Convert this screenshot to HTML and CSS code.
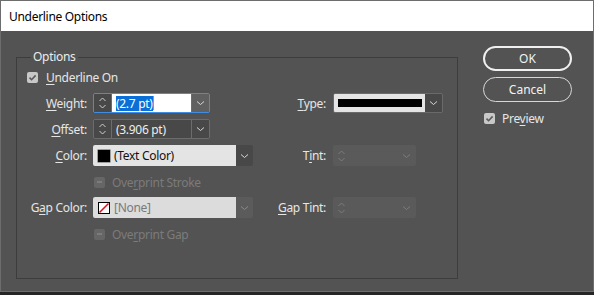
FILE: index.html
```html
<!DOCTYPE html>
<html>
<head>
<meta charset="utf-8">
<link rel="stylesheet" href="styles.css">
</head>
<body>
<div class="window">
  <div class="titlebar">Underline Options</div>
  <div class="content">
    <fieldset class="group">
      <legend class="legend">Options</legend>
      <div class="rows">
        <div class="row row-cb">
          <span class="check on"><svg width="11" height="11" viewBox="0 0 11 11"><path d="M2.5 5.6 L4.6 7.7 L8.6 3.4" fill="none" stroke="#5a5a5a" stroke-width="1.6"/></svg></span>
          <span class="cb-text"><u>U</u>nderline On</span>
        </div>

        <div class="row row-weight">
          <span class="lbl"><u>W</u>eight:</span>
          <div class="col2">
            <div class="spin focus">
              <span class="stepper"><svg width="9" height="14" viewBox="0 0 9 14"><path d="M1.5 5 L4.5 2 L7.5 5 M1.5 9 L4.5 12 L7.5 9" fill="none" stroke="#cfcfcf" stroke-width="1"/></svg></span>
              <span class="field white"><span class="sel">(2.7 pt)</span><span class="caret"></span></span>
              <span class="drop hover"><svg width="9" height="6" viewBox="0 0 9 6"><path d="M1 1.5 L4.5 4.5 L8 1.5" fill="none" stroke="#d8d8d8" stroke-width="1"/></svg></span>
            </div>
          </div>
          <span class="lbl2"><u>T</u>ype:</span>
          <div class="combo type">
            <span class="light"><span class="bar"></span></span>
            <span class="drop"><svg width="9" height="6" viewBox="0 0 9 6"><path d="M1 1.5 L4.5 4.5 L8 1.5" fill="none" stroke="#d8d8d8" stroke-width="1"/></svg></span>
          </div>
        </div>

        <div class="row row-offset">
          <span class="lbl"><u>O</u>ffset:</span>
          <div class="col2">
            <div class="spin">
              <span class="stepper"><svg width="9" height="14" viewBox="0 0 9 14"><path d="M1.5 5 L4.5 2 L7.5 5 M1.5 9 L4.5 12 L7.5 9" fill="none" stroke="#cfcfcf" stroke-width="1"/></svg></span>
              <span class="field dark">(3.906 pt)</span>
              <span class="drop"><svg width="9" height="6" viewBox="0 0 9 6"><path d="M1 1.5 L4.5 4.5 L8 1.5" fill="none" stroke="#d8d8d8" stroke-width="1"/></svg></span>
            </div>
          </div>
        </div>

        <div class="row row-color">
          <span class="lbl"><u>C</u>olor:</span>
          <div class="col2">
            <div class="combo color">
              <span class="light"><span class="swatch black"></span><span class="ctext">(Text Color)</span></span>
              <span class="drop"><svg width="9" height="6" viewBox="0 0 9 6"><path d="M1 1.5 L4.5 4.5 L8 1.5" fill="none" stroke="#d8d8d8" stroke-width="1"/></svg></span>
            </div>
          </div>
          <span class="lbl2">T<u>i</u>nt:</span>
          <div class="tint">
            <svg width="9" height="14" viewBox="0 0 9 14"><path d="M1.5 5 L4.5 2 L7.5 5 M1.5 9 L4.5 12 L7.5 9" fill="none" stroke="#7c7c7c" stroke-width="1"/></svg>
            <svg width="9" height="6" viewBox="0 0 9 6"><path d="M1 1.5 L4.5 4.5 L8 1.5" fill="none" stroke="#7c7c7c" stroke-width="1"/></svg>
          </div>
        </div>

        <div class="row row-cb2">
          <span class="check off"><span class="dash"></span></span>
          <span class="cb-text dis">Ove<u>r</u>print Stroke</span>
        </div>

        <div class="row row-gap">
          <span class="lbl">G<u>a</u>p Color:</span>
          <div class="col2">
            <div class="combo color disabled">
              <span class="light"><span class="swatch none"><svg width="12" height="12" viewBox="0 0 12 12"><rect x="0.5" y="0.5" width="11" height="11" fill="#fff" stroke="#000"/><path d="M1.5 10.5 L10.5 1.5" stroke="#e0101a" stroke-width="1.6"/></svg></span><span class="ctext">[None]</span></span>
              <span class="drop"><svg width="9" height="6" viewBox="0 0 9 6"><path d="M1 1.5 L4.5 4.5 L8 1.5" fill="none" stroke="#8a8a8a" stroke-width="1"/></svg></span>
            </div>
          </div>
          <span class="lbl2"><u>G</u>ap Tint:</span>
          <div class="tint">
            <svg width="9" height="14" viewBox="0 0 9 14"><path d="M1.5 5 L4.5 2 L7.5 5 M1.5 9 L4.5 12 L7.5 9" fill="none" stroke="#7c7c7c" stroke-width="1"/></svg>
            <svg width="9" height="6" viewBox="0 0 9 6"><path d="M1 1.5 L4.5 4.5 L8 1.5" fill="none" stroke="#7c7c7c" stroke-width="1"/></svg>
          </div>
        </div>

        <div class="row row-cb2 last">
          <span class="check off"><span class="dash"></span></span>
          <span class="cb-text dis">Ove<u>r</u>print Gap</span>
        </div>
      </div>
    </fieldset>

    <div class="buttons">
      <button class="btn default">OK</button>
      <button class="btn">Cancel</button>
      <div class="preview">
        <span class="check on"><svg width="11" height="11" viewBox="0 0 11 11"><path d="M2.5 5.6 L4.6 7.7 L8.6 3.4" fill="none" stroke="#5a5a5a" stroke-width="1.6"/></svg></span>
        <span class="cb-text">Pre<u>v</u>iew</span>
      </div>
    </div>
  </div>
</div>
<div class="desk"></div>
</body>
</html>
```

FILE: styles.css
```css
html, body {
  margin: 0;
  padding: 0;
  background: #2a2a2a;
}
body {
  width: 594px;
  height: 295px;
  overflow: hidden;
  font-family: "Noto Sans", "Open Sans", sans-serif;
  font-size: 12px;
  letter-spacing: -0.3px;
  color: #e6e6e6;
}
.window {
  width: 594px;
  height: 292px;
  box-sizing: border-box;
  border: 1px solid #6d6d6d;
  background: #535353;
  display: flex;
  flex-direction: column;
}
.titlebar {
  height: 30px;
  flex: none;
  background: #ffffff;
  color: #000;
  display: flex;
  align-items: center;
  padding-left: 8px;
  padding-top: 1px;
  box-sizing: border-box;
}
.content {
  display: flex;
  padding-left: 15px;
}
.group {
  margin: 18px 0 0 0;
  padding: 0 0 38px 10px;
  width: 442px;
  box-sizing: border-box;
  border: 1px solid #3d3d3d;
  min-inline-size: 0;
}
.legend {
  margin-left: 4px;
  padding: 0 2px;
  line-height: 16px;
  color: #ececec;
}
.rows {
  display: flex;
  flex-direction: column;
}
.row {
  display: flex;
  align-items: center;
}
.row-cb {
  height: 12px;
  margin-top: 6px;
}
.row-weight { height: 20px; margin-top: 10px; }
.row-offset { height: 20px; margin-top: 6px; }
.row-color { height: 21px; margin-top: 6px; }
.row-cb2 { height: 12px; margin-top: 10px; padding-left: 67px; }
.row-gap { height: 21px; margin-top: 9px; }

.check {
  width: 11px;
  height: 11px;
  border-radius: 2px;
  flex: none;
  display: flex;
  align-items: center;
  justify-content: center;
}
.check.on { background: #c8c8c8; }
.check.off { background: #666666; }
.check .dash {
  width: 5px;
  height: 2px;
  background: #7c7c7c;
}
.cb-text {
  margin-left: 8px;
  white-space: nowrap;
}
.cb-text.dis { margin-left: 7px; color: #7b7b7b; }
u { text-decoration: underline; text-underline-offset: 2px; }

.lbl {
  width: 66px;
  padding-right: 6px;
  box-sizing: border-box;
  text-align: right;
  white-space: nowrap;
  flex: none;
}
.col2 {
  width: 160px;
  flex: none;
  display: flex;
  height: 100%;
}
.lbl2 {
  width: 80px;
  padding-right: 7px;
  box-sizing: border-box;
  text-align: right;
  white-space: nowrap;
  flex: none;
}

.spin {
  width: 117px;
  height: 20px;
  box-sizing: border-box;
  border: 1px solid #6c6c6c;
  border-radius: 2px;
  display: flex;
  overflow: hidden;
}
.spin.focus { border-color: #3f8ee3; }
.stepper {
  width: 17px;
  flex: none;
  border-right: 1px solid #6c6c6c;
  background: #484848;
  display: flex;
  align-items: center;
  justify-content: center;
}
.field {
  flex: 1;
  display: flex;
  align-items: center;
  padding-left: 4px;
  white-space: nowrap;
}
.field.white { background: #ffffff; }
.field.dark { background: #484848; color: #ededed; }
.sel {
  background: #0a6fd6;
  color: #ffffff;
  line-height: 15px;
}
.caret {
  width: 1px;
  height: 14px;
  background: #e08a1c;
}
.drop {
  width: 17px;
  flex: none;
  background: #484848;
  border-left: 1px solid #6c6c6c;
  display: flex;
  align-items: center;
  justify-content: center;
}
.drop.hover { background: #606060; }

.combo {
  height: 21px;
  box-sizing: border-box;
  display: flex;
  border-radius: 2px;
  overflow: hidden;
  border: 1px solid #6a6a6a;
}
.combo .light {
  flex: 1;
  background: #e4e4e4;
  display: flex;
  align-items: center;
}
.combo .drop { border-left: 0; }
.combo.type {
  width: 110px;
  height: 20px;
}
.combo.type .light { padding-left: 4px; }
.bar {
  width: 84px;
  height: 8px;
  background: #000;
}
.combo.color { width: 160px; border: 0; }
.combo.color .light { padding-left: 5px; }
.swatch {
  width: 12px;
  height: 12px;
  flex: none;
  display: block;
}
.swatch.black {
  background: #000;
  box-shadow: 0 0 0 0.5px #555;
}
.swatch svg { display: block; }
.ctext {
  margin-left: 4px;
  color: #111;
  white-space: nowrap;
}
.combo.disabled .light { background: #dcdcdc; }
.combo.disabled .ctext { color: #7a7a7a; }
.combo.disabled .drop { background: #5b5b5b; }

.tint {
  width: 83px;
  height: 21px;
  background: #5a5a5a;
  border-radius: 2px;
  display: flex;
  align-items: center;
  justify-content: space-between;
  padding: 0 5px 0 4px;
  box-sizing: border-box;
}

.buttons {
  margin-left: 25px;
  margin-top: 15px;
  display: flex;
  flex-direction: column;
  width: 89px;
}
.btn {
  width: 89px;
  height: 25px;
  border-radius: 13px;
  background: #535353;
  border: 1px solid #d8d8d8;
  color: #f2f2f2;
  font-family: "Noto Sans", "Open Sans", sans-serif;
  font-size: 12px;
  padding: 0;
  margin: 0;
}
.btn.default { border: 2px solid #f0f0f0; }
.btn + .btn { margin-top: 6px; }
.preview {
  display: flex;
  align-items: center;
  margin-top: 8px;
  margin-left: 1px;
}
.preview .cb-text { margin-left: 7px; }
.desk {
  height: 3px;
  background: #252525;
}
```
